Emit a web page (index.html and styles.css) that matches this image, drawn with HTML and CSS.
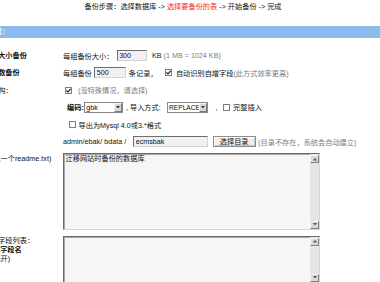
FILE: index.html
```html
<!DOCTYPE html>
<html lang="zh-CN">
<head>
<meta charset="utf-8">
<title>选择要备份的表</title>
<link rel="stylesheet" href="styles.css">
</head>
<body>
<div class="page">
  <div class="steps">备份步骤：选择数据库 -&gt; <span class="cur">选择要备份的表</span> -&gt; 开始备份 -&gt; 完成</div>
  <form class="panel">
    <div class="bar">备份设置：</div>
    <div class="rows">
      <div class="row">
        <div class="lbl"><b>按文件大小备份</b></div>
        <div class="val">
          <span>每组备份大小：</span>
          <input class="txt w-size" type="text" value="300">
          <span class="kb">KB</span>
          <span class="hint h-kb">(1 MB = 1024 KB)</span>
        </div>
      </div>
      <div class="row">
        <div class="lbl"><b>按记录数备份</b></div>
        <div class="val">
          <span>每组备份</span>
          <input class="txt w-line" type="text" value="500">
          <span class="t-rec">条记录，</span>
          <span class="chk c-auto"><input type="checkbox" checked><svg viewBox="0 0 7 7"><path d="M1.4 3.4 2.9 4.9 5.7 1.9"/></svg></span>
          <span class="t-auto">自动识别自增字段</span><span class="hint">(此方式效率更高)</span>
        </div>
      </div>
      <div class="row">
        <div class="lbl">数据结构：</div>
        <div class="val">
          <span class="chk c-stru"><input type="checkbox" checked><svg viewBox="0 0 7 7"><path d="M1.4 3.4 2.9 4.9 5.7 1.9"/></svg></span>
          <span class="hint h-stru">(没特殊情况，请选择)</span>
        </div>
      </div>
      <div class="row">
        <div class="lbl"></div>
        <div class="val">
          <b class="t-enc">编码:</b>
          <span class="sel sel-gbk"><select><option>gbk</option><option>utf8</option></select><span class="arrow"><svg viewBox="0 0 4 3"><path d="M0 0H4L2 2.5Z"/></svg></span></span>
          <span class="t-ins">, 导入方式:</span>
          <span class="sel sel-rep"><select><option>REPLACE</option><option>INSERT</option></select><span class="arrow"><svg viewBox="0 0 4 3"><path d="M0 0H4L2 2.5Z"/></svg></span></span>
          <span class="t-comma">,</span>
          <span class="chk c-full"><input type="checkbox"><svg viewBox="0 0 7 7"><path d="M1.4 3.4 2.9 4.9 5.7 1.9"/></svg></span>
          <span class="t-full">完整插入</span>
        </div>
      </div>
      <div class="row">
        <div class="lbl"></div>
        <div class="val">
          <span class="chk c-old"><input type="checkbox"><svg viewBox="0 0 7 7"><path d="M1.4 3.4 2.9 4.9 5.7 1.9"/></svg></span>
          <span class="t-old">导出为Mysql 4.0或3.*格式</span>
        </div>
      </div>
      <div class="row">
        <div class="lbl"></div>
        <div class="val">
          <span>admin/ebak/ bdata /</span>
          <input class="txt w-dir" type="text" value="ecmsbak">
          <button class="btn" type="button">选择目录</button>
          <span class="hint h-dir">(目录不存在，系统会自动建立)</span>
        </div>
      </div>
      <div class="row ta-row ta-first">
        <div class="lbl">(会生成一个readme.txt)</div>
        <div class="val">
          <div class="ta ta-big">
            <textarea>迁移网站时备份的数据库</textarea>
            <div class="sb">
              <span class="sb-btn"><svg viewBox="0 0 4 3"><path d="M0 2.5H4L2 0Z"/></svg></span>
              <span class="sb-track"></span>
              <span class="sb-btn"><svg viewBox="0 0 4 3"><path d="M0 0H4L2 2.5Z"/></svg></span>
            </div>
          </div>
        </div>
      </div>
      <div class="row ta-row ta-second">
        <div class="lbl">自增值字段列表：<br>如：<b>表.字段名</b><br>(逗号隔开)</div>
        <div class="val">
          <div class="ta ta-small">
            <textarea></textarea>
            <div class="sb">
              <span class="sb-btn"><svg viewBox="0 0 4 3"><path d="M0 2.5H4L2 0Z"/></svg></span>
              <span class="sb-track"></span>
              <span class="sb-btn"><svg viewBox="0 0 4 3"><path d="M0 0H4L2 2.5Z"/></svg></span>
            </div>
          </div>
        </div>
      </div>
    </div>
  </form>
</div>
</body>
</html>
```

FILE: styles.css
```css
* { box-sizing: border-box; }
html, body { margin: 0; padding: 0; background: #fff; }
body {
  overflow: hidden;
  font-family: "Liberation Sans", "Noto Sans CJK SC", sans-serif;
  font-size: 7.2px;
  color: #111;
}
input, select, textarea, button { font: inherit; color: #111; }

.page { width: 462px; margin-left: -48px; }

.steps {
  height: 13px;
  line-height: 13px;
  margin-bottom: 13px;
  text-align: center;
  white-space: nowrap;
}
.cur { color: #ff1f1f; }

.panel { margin: 0; }
.bar {
  height: 12px;
  line-height: 12px;
  background: #8bbbec;
  color: #fff;
  font-weight: bold;
  padding-left: 21.2px;
}

.rows { margin-top: 8.9px; }
.row { display: flex; align-items: center; height: 17.25px; }
.lbl {
  flex: none;
  width: 111px;
  padding-left: 24.6px;
  white-space: nowrap;
  overflow: hidden;
  line-height: 9px;
}
.val {
  flex: 1;
  min-width: 0;
  display: flex;
  align-items: center;
  white-space: pre;
}

.hint { color: #7c7c7c; }

/* text inputs */
.txt {
  height: 11px;
  margin: 0;
  padding: 0 1.5px;
  line-height: 9px;
  border: 1px solid;
  border-color: #6e6e6e #d2d2d2 #d2d2d2 #6e6e6e;
  background: #f1f1f1;
  outline: none;
}
.w-size { width: 30px; margin-left: 3.3px; }
.w-line { width: 31.5px; margin-left: 2.5px; }
.w-dir { width: 74.7px; margin-left: 7px; }

.kb { margin-left: 5.3px; }
.h-kb { margin-left: 2px; }
.t-rec { margin-left: 3px; }

/* checkboxes */
.chk { display: inline-grid; width: 7px; height: 7px; flex: none; }
.chk > * { grid-area: 1 / 1; }
.chk input {
  -webkit-appearance: none;
  appearance: none;
  margin: 0;
  width: 7px;
  height: 7px;
  border: 1px solid #7d7d7d;
  background: #fff;
}
.chk svg {
  width: 7px;
  height: 7px;
  fill: none;
  stroke: #1a1a1a;
  stroke-width: 1.15;
  pointer-events: none;
  visibility: hidden;
}
.chk input:checked + svg { visibility: visible; }

.c-auto { margin-left: 7.4px; }
.t-auto { margin-left: 4px; }
.c-stru { margin-left: 2px; }
.h-stru { margin-left: 6px; }

/* selects */
.t-enc { margin-left: 4px; }
.sel {
  display: inline-flex;
  flex: none;
  height: 11px;
  border: 1px solid #8a8a8a;
  background: #fff;
}
.sel select {
  -webkit-appearance: none;
  appearance: none;
  flex: 1;
  min-width: 0;
  height: 100%;
  margin: 0;
  padding: 0 0 0 1.5px;
  border: 0;
  background: transparent;
  line-height: 9px;
  outline: none;
}
.sel .arrow {
  flex: none;
  width: 8px;
  height: 9px;
  display: flex;
  align-items: center;
  justify-content: center;
  background: #d8d8d8;
  border: 1px solid;
  border-color: #f5f5f5 #7a7a7a #7a7a7a #f5f5f5;
}
.arrow svg { width: 4px; height: 3px; fill: #333; }
.sel-gbk { width: 39.2px; }
.t-ins { margin-left: 3px; }
.sel-rep { width: 41px; margin-left: 5.9px; font-size: 6.6px; }
.t-comma { margin-left: 8px; }
.c-full { margin-left: 5px; }
.t-full { margin-left: 3.5px; }

.c-old { margin-left: 6px; }
.t-old { margin-left: 2.5px; }

/* button */
.btn {
  width: 43.3px;
  height: 11px;
  margin: 0 0 0 4.7px;
  padding: 0;
  line-height: 9px;
  background: #efefef;
  border: 1px solid #8c8c8c;
  box-shadow: inset 1px 1px 0 #fff, inset -1px -1px 0 #c4c4c4;
  text-align: center;
}
.h-dir { margin-left: 2.3px; }

/* textareas */
.row.ta-row { height: auto; align-items: flex-start; }
.ta-first { padding: 2.9px 0 3px; }
.ta-second { padding: 3px 0 0; }
.ta-row .lbl { padding-top: 0.5px; }

.ta {
  display: flex;
  width: 257.3px;
  border: 1px solid;
  border-color: #6b6b6b #d6d6d6 #d6d6d6 #6b6b6b;
  background: #f6f6f6;
  box-shadow: inset 1px 1px 0 #a8a8a8;
}
.ta-big { height: 76.7px; }
.ta-small { height: 47px; }
.ta textarea {
  flex: 1;
  min-width: 0;
  margin: 0;
  padding: 0 1.5px;
  border: 0;
  background: transparent;
  line-height: 9px;
  resize: none;
  outline: none;
  overflow: hidden;
}
.sb {
  flex: none;
  width: 9px;
  display: flex;
  flex-direction: column;
  padding-top: 1px;
  background: #e5e5e5;
}
.sb-btn {
  flex: none;
  height: 8px;
  display: flex;
  align-items: center;
  justify-content: center;
  background: #dadada;
  border: 1px solid;
  border-color: #f6f6f6 #7e7e7e #7e7e7e #f6f6f6;
}
.sb-btn svg { width: 4px; height: 3px; fill: #555; }
.sb-track { flex: 1; }
```
